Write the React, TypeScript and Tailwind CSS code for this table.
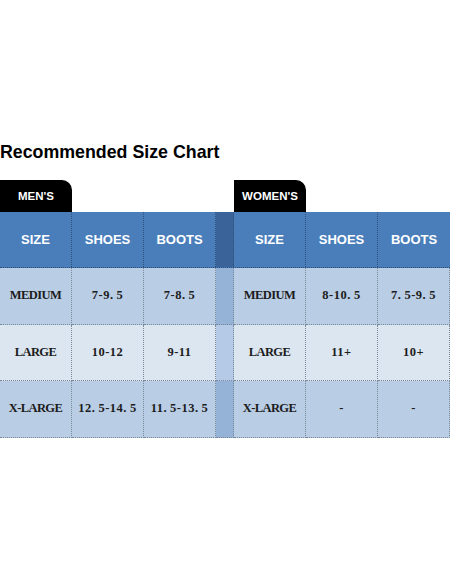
import React from 'react';

type Row = { size: string; men: [string, string]; women: [string, string]; tone: 'dark' | 'light' };

const ROWS: Row[] = [
  { size: 'MEDIUM', men: ['7-9.5', '7-8.5'], women: ['8-10.5', '7.5-9.5'], tone: 'dark' },
  { size: 'LARGE', men: ['10-12', '9-11'], women: ['11+', '10+'], tone: 'light' },
  { size: 'X-LARGE', men: ['12.5-14.5', '11.5-13.5'], women: ['-', '-'], tone: 'dark' },
];

const sans = 'font-["Liberation_Sans",Arial,sans-serif]';
const serif = 'font-["Liberation_Serif","Times_New_Roman",serif]';

function HeadCell({ label }: { label: string }) {
  return (
    <div className={`flex items-center justify-center border-r border-dotted border-[#2f4f78] text-[13px] font-bold text-white ${sans}`}>
      {label}
    </div>
  );
}

// the chart's numbers are set with a wide gap after the decimal point
function Num({ value }: { value: string }) {
  const parts = value.split('.');
  return (
    <span className="tracking-[0.5px]">
      {parts.map((p, i) => (
        <React.Fragment key={i}>
          {p}
          {i < parts.length - 1 && <span className="mr-[3px]">.</span>}
        </React.Fragment>
      ))}
    </span>
  );
}

function BodyCell({ value, tone, label }: { value: string; tone: 'dark' | 'light'; label?: boolean }) {
  return (
    <div
      className={`flex items-center justify-center border-r border-b border-dotted border-[#7a8797] text-[12.5px] font-bold text-[#1c1c1c] ${serif} ${
        tone === 'dark' ? 'bg-[#b9cde5]' : 'bg-[#dce6f1]'
      }`}
    >
      {label ? <span className="tracking-[-0.6px]">{value}</span> : <Num value={value} />}
    </div>
  );
}

export default function App() {
  return (
    <div className="h-[584px] w-[452px] bg-white">
      <div className="pt-[141px]">
        <h1 className={`text-[17.8px] leading-[22px] font-bold text-black ${sans}`}>Recommended Size Chart</h1>

        <div className="mt-[17px] grid w-[450px] grid-cols-[72px_72px_72px_18px_72px_72px_72px]">
          {/* tabs */}
          <div className={`flex h-[32px] items-center justify-center rounded-tr-[10px] bg-black pt-[1px] text-[11.5px] font-bold text-white ${sans}`}>
            MEN'S
          </div>
          <div className="col-span-3" />
          <div className={`flex h-[32px] items-center justify-center rounded-tr-[10px] bg-black pt-[1px] text-[11.5px] font-bold text-white ${sans}`}>
            WOMEN'S
          </div>
          <div className="col-span-2" />

          {/* header */}
          <div className="col-span-7 grid h-[56px] grid-cols-[72px_72px_72px_18px_72px_72px_72px] border-b border-dotted border-[#2f4f78] bg-[#4a7ebb]">
            <HeadCell label="SIZE" />
            <HeadCell label="SHOES" />
            <HeadCell label="BOOTS" />
            <div className="border-r border-dotted border-[#2f4f78] bg-[#3a6399]" />
            <HeadCell label="SIZE" />
            <HeadCell label="SHOES" />
            <div className={`flex items-center justify-center text-[13px] font-bold text-white ${sans}`}>BOOTS</div>
          </div>

          {/* body */}
          {ROWS.map((r) => (
            <div key={r.size} className="col-span-7 grid h-[56.5px] grid-cols-[72px_72px_72px_18px_72px_72px_72px]">
              <BodyCell value={r.size} tone={r.tone} label />
              <BodyCell value={r.men[0]} tone={r.tone} />
              <BodyCell value={r.men[1]} tone={r.tone} />
              <div
                className={`border-r border-b border-dotted border-[#7a8797] ${
                  r.tone === 'dark' ? 'bg-[#95b3d7]' : 'bg-[#b5cae6]'
                }`}
              />
              <BodyCell value={r.size} tone={r.tone} label />
              <BodyCell value={r.women[0]} tone={r.tone} />
              <BodyCell value={r.women[1]} tone={r.tone} />
            </div>
          ))}
        </div>
      </div>
    </div>
  );
}
